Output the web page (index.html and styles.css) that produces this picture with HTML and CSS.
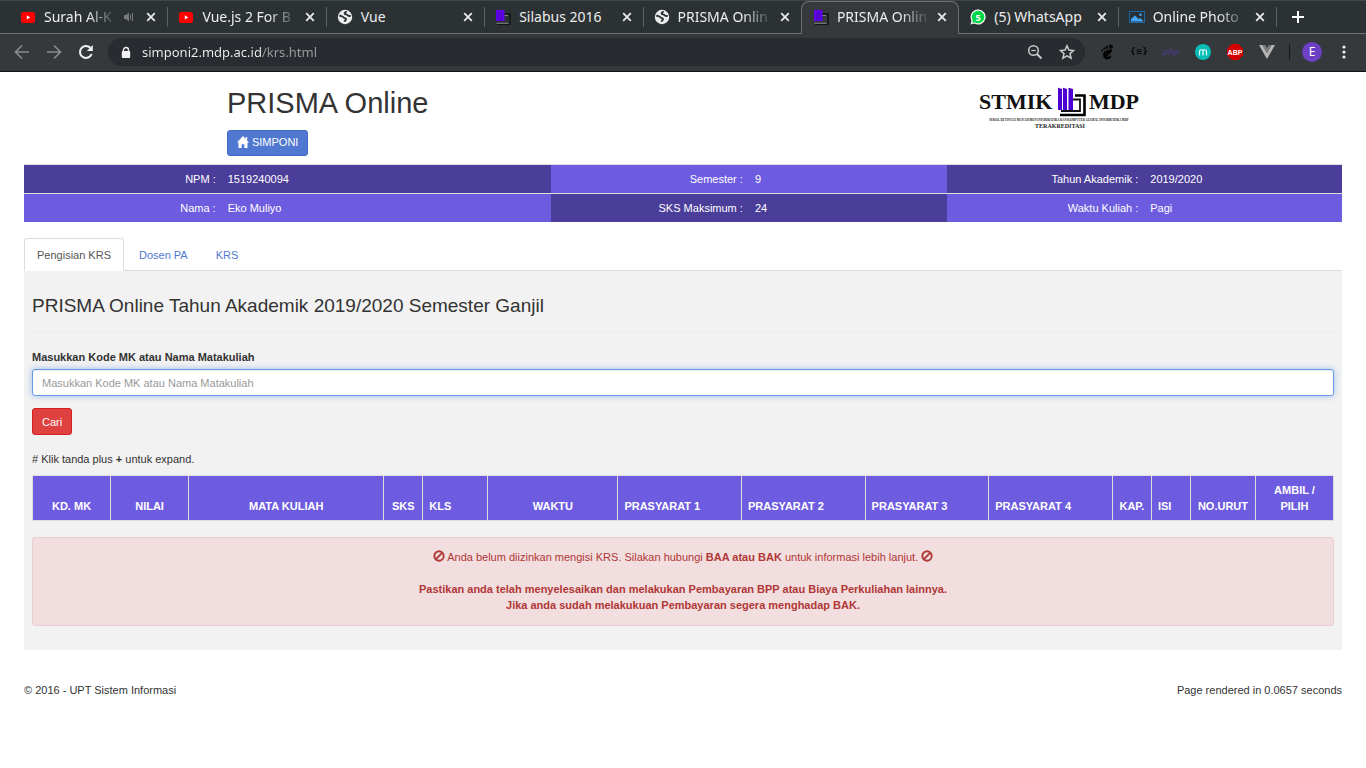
FILE: index.html
```html
<!DOCTYPE html>
<html lang="id">
<head>
<meta charset="utf-8">
<title>PRISMA Online</title>
<link rel="stylesheet" href="styles.css">
</head>
<body>
<svg class="defs" aria-hidden="true">
  <symbol id="i-close" viewBox="0 0 16 16"><path d="M4.2 4.2l7.6 7.6M11.8 4.2l-7.6 7.6" stroke="#e8eaeb" stroke-width="1.8" fill="none"/></symbol>
  <symbol id="i-youtube" viewBox="0 0 16 16"><rect x="1" y="3" width="14" height="11" rx="2.6" fill="#f00"/><path d="M6.8 6.2v4.4l3.4-2.2z" fill="#fff"/></symbol>
  <symbol id="i-globe" viewBox="0 0 16 16"><circle cx="8" cy="8" r="7.2" fill="#ececec"/><path d="M2.4 6.4c1.6 1 3.2.6 4 1.9.8 1.200 2.300.4 2.600 1.600.2 1-1.200 1.700-1.500 2.900M9.300 2.200c-.2 1.300-1.800 1-1.700 2.200.1 1.300 2.300.6 3 1.900.6 1 2 .4 3.200.9" fill="none" stroke="#2c3234" stroke-width="1.900"/></symbol>
  <symbol id="i-mdp" viewBox="0 0 16 16"><path d="M9 5h6v10.500H2" fill="none" stroke="#141414" stroke-width="1.500"/><path d="M9 6.500h4M1.500 14.300h12" fill="none" stroke="#858585" stroke-width="1"/><path d="M1 1.500L2.500.5l1.500 1 1-1 1.500 1 1.500-1 1.500 1V12H1z" fill="#6000ee"/><path d="M3.800 3v9M6.600 3v9" stroke="#3a1690" stroke-width=".7"/></symbol>
  <symbol id="i-ban" viewBox="0 0 12 12"><circle cx="6" cy="6" r="4.700" fill="none" stroke="currentColor" stroke-width="1.900"/><path d="M2.800 9.200l6.400-6.400" stroke="currentColor" stroke-width="1.900"/></symbol>
</svg>

<header class="browser">
  <div class="tabstrip">
    <div class="tab"><svg class="favicon"><use href="#i-youtube"/></svg><span class="tab-title fade">Surah Al-K</span><svg class="speaker" viewBox="0 0 12 12"><path d="M1 4h2l3-2.500v9L3 8H1z" fill="#777b7d"/><path d="M7.500 3.500v5M9.500 2v8" stroke="#777b7d" fill="none"/></svg><button class="close" aria-label="Tutup tab"><svg><use href="#i-close"/></svg></button></div>
    <div class="tab"><svg class="favicon"><use href="#i-youtube"/></svg><span class="tab-title fade">Vue.js 2 For B</span><button class="close" aria-label="Tutup tab"><svg><use href="#i-close"/></svg></button></div>
    <div class="tab"><svg class="favicon"><use href="#i-globe"/></svg><span class="tab-title">Vue</span><button class="close" aria-label="Tutup tab"><svg><use href="#i-close"/></svg></button></div>
    <div class="tab"><svg class="favicon"><use href="#i-mdp"/></svg><span class="tab-title">Silabus 2016</span><button class="close" aria-label="Tutup tab"><svg><use href="#i-close"/></svg></button></div>
    <div class="tab before-active"><svg class="favicon"><use href="#i-globe"/></svg><span class="tab-title fade">PRISMA Onlin</span><button class="close" aria-label="Tutup tab"><svg><use href="#i-close"/></svg></button></div>
    <div class="tab active"><svg class="favicon"><use href="#i-mdp"/></svg><span class="tab-title fade">PRISMA Onlin</span><button class="close" aria-label="Tutup tab"><svg><use href="#i-close"/></svg></button></div>
    <div class="tab"><svg class="favicon" viewBox="0 0 16 16"><path d="M8 .5a7.500 7.500 0 1 1-3.600 14L.5 15.500l1-3.900A7.500 7.500 0 0 1 8 .5z" fill="#fff"/><path d="M8 1.700a6.300 6.300 0 1 1-3.300 11.600l-2.500.6.700-2.400A6.300 6.300 0 0 1 8 1.700z" fill="#00d746"/><text x="8" y="11.500" text-anchor="middle" class="badge-text">5</text></svg><span class="tab-title">(5) WhatsApp</span><button class="close" aria-label="Tutup tab"><svg><use href="#i-close"/></svg></button></div>
    <div class="tab"><svg class="favicon" viewBox="0 0 16 16"><rect x=".5" y="2.500" width="15" height="11" fill="#263238" stroke="#1769aa"/><path d="M2 12.500V10L6 6.500l3.500 3.500L11 9l3 2.500v1z" fill="#42a5f5"/><circle cx="11.500" cy="5.800" r="1.300" fill="#42a5f5"/></svg><span class="tab-title fade">Online Photo</span><button class="close" aria-label="Tutup tab"><svg><use href="#i-close"/></svg></button></div>
    <button class="new-tab" aria-label="Tab baru"><svg viewBox="0 0 14 14"><path d="M7 1v12M1 7h12" stroke="#fff" stroke-width="2"/></svg></button>
  </div>
  <div class="toolbar">
    <button class="nav-btn" aria-label="Kembali"><svg viewBox="0 0 16 16"><path d="M15 8H2M8 1.500L1.500 8 8 14.500" fill="none" stroke="#888b8d" stroke-width="1.700"/></svg></button>
    <button class="nav-btn" aria-label="Maju"><svg viewBox="0 0 16 16"><path d="M1 8h13M8 1.500L14.500 8 8 14.500" fill="none" stroke="#888b8d" stroke-width="1.700"/></svg></button>
    <button class="nav-btn" aria-label="Muat ulang"><svg viewBox="0 0 16 16"><path d="M13.600 10A6 6 0 1 1 12.300 3.800" fill="none" stroke="#f1f1f1" stroke-width="2.100"/><path d="M14.800 1v6H8.800z" fill="#f1f1f1"/></svg></button>
    <div class="omnibox">
      <svg class="lock" viewBox="0 0 10 12"><path d="M2.500 5V3.500a2.500 2.500 0 0 1 5 0V5" fill="none" stroke="#f1f1f1" stroke-width="1.400"/><rect x=".8" y="4.600" width="8.400" height="7" rx="1" fill="#f1f1f1"/></svg>
      <input class="url" type="text" aria-label="Alamat" value="simponi2.mdp.ac.id/krs.html">
      <button class="omni-btn" aria-label="Zoom"><svg viewBox="0 0 16 16"><circle cx="6.500" cy="6.500" r="4.800" fill="none" stroke="#c8cacb" stroke-width="1.500"/><path d="M10 10l4.500 4.500" stroke="#c8cacb" stroke-width="2"/><path d="M4.300 6.500h4.400" stroke="#c8cacb" stroke-width="1.200"/></svg></button>
      <button class="omni-btn" aria-label="Tandai"><svg viewBox="0 0 16 16"><path d="M8 1.800l1.900 4.300 4.600.4-3.500 3.100 1.100 4.600L8 11.800l-4.100 2.400L5 9.600 1.500 6.500l4.600-.4z" fill="none" stroke="#c8cacb" stroke-width="1.500"/></svg></button>
    </div>
    <div class="extensions">
      <button class="ext" aria-label="GNOME"><svg viewBox="0 0 16 16"><g fill="#050505"><ellipse cx="11.800" cy="2.600" rx="2.100" ry="2.200"/><ellipse cx="7.900" cy="3.300" rx="1.100" ry="1.600"/><ellipse cx="5.300" cy="4.600" rx="1" ry="1.400"/><ellipse cx="3.200" cy="6.500" rx=".9" ry="1.100"/><path d="M13 5.500C8 5 4 7.500 4 10.500 4 13.500 6 15.500 8.500 15.500c2.800 0 4-2.500 3.700-3.700-.4-1-1.600-.5-2 .4-.6 1.400-1.700.9-1.600 0C8.900 10.500 13.600 9 13 5.500z"/></g></svg></button>
      <button class="ext json">{≡}</button>
      <button class="ext php">php</button>
      <button class="ext" aria-label="m"><svg viewBox="0 0 16 16"><circle cx="8" cy="8" r="8" fill="#07bdb5"/><path d="M4.500 11.500V7.500a1.700 1.700 0 0 1 3.500 0v4M8 7.500a1.700 1.700 0 0 1 3.500 0v4" fill="none" stroke="#e6fffd" stroke-width="1.200"/></svg></button>
      <button class="ext" aria-label="AdBlock Plus"><svg viewBox="0 0 16 16"><path d="M4.700 0h6.600L16 4.700v6.600L11.300 16H4.700L0 11.300V4.700z" fill="#d30000"/><text x="8" y="10.500" text-anchor="middle" class="abp-text">ABP</text></svg></button>
      <button class="ext" aria-label="Vue"><svg viewBox="0 0 16 16"><path d="M0 1h3.500L8 9l4.500-8H16L8 15z" fill="#b5b5b5"/><path d="M3.500 1h2.800L8 4l1.700-3h2.800L8 9z" fill="#7b7b7b"/></svg></button>
    </div>
    <span class="divider"></span>
    <button class="avatar">E</button>
    <button class="menu" aria-label="Menu"><svg viewBox="0 0 4 16"><g fill="#f1f1f1"><circle cx="2" cy="3" r="1.600"/><circle cx="2" cy="8" r="1.600"/><circle cx="2" cy="13" r="1.600"/></g></svg></button>
  </div>
</header>

<main class="page">
  <div class="masthead">
    <div class="brand">
      <h1>PRISMA Online</h1>
      <a class="btn btn-primary" href="#"><svg class="home" viewBox="0 0 12 12"><path d="M6 0l6 6.400h-1.500V12H7.300V8.200H4.700V12H1.500V6.400H0z" fill="#fff"/><path d="M8.600 1h1.600v3H8.600z" fill="#fff"/></svg> SIMPONI</a>
    </div>
    <svg class="logo" viewBox="0 0 160 42" role="img" aria-label="STMIK MDP">
      <text x="0" y="22" class="logo-name">STMIK</text>
      <text x="160" y="22" text-anchor="end" class="logo-name">MDP</text>
      <path d="M96 8.500h9.500V28H81" fill="none" stroke="#000" stroke-width="2.600"/>
      <path d="M94 12.500h7V24H82" fill="none" stroke="#111" stroke-width="1.800"/>
      <path d="M79 .8l4 1.200V23h-4zM84 .8l4 1.200V23h-4zM89.500.8l4.500 1.200V23h-4.500z" fill="#4d00d2"/>
      <text x="80" y="34" text-anchor="middle" class="logo-sub">SEKOLAH TINGGI MANAJEMEN INFORMATIKA DAN KOMPUTER GLOBAL INFORMATIKA MDP</text>
      <text x="81" y="41" text-anchor="middle" class="logo-acc">TERAKREDITASI</text>
    </svg>
  </div>

  <table class="info">
    <tbody>
      <tr><th scope="row" class="dark">NPM :</th><td class="dark wide">1519240094</td><th scope="row" class="light">Semester :</th><td class="light">9</td><th scope="row" class="dark">Tahun Akademik :</th><td class="dark">2019/2020</td></tr>
      <tr><th scope="row" class="light">Nama :</th><td class="light">Eko Muliyo</td><th scope="row" class="dark">SKS Maksimum :</th><td class="dark">24</td><th scope="row" class="light">Waktu Kuliah :</th><td class="light">Pagi</td></tr>
    </tbody>
  </table>

  <nav class="nav-tabs">
    <a class="nav-link current" href="#">Pengisian KRS</a>
    <a class="nav-link" href="#">Dosen PA</a>
    <a class="nav-link" href="#">KRS</a>
  </nav>

  <section class="panel">
    <h3>PRISMA Online Tahun Akademik 2019/2020 Semester Ganjil</h3>
    <form class="search">
      <label for="mk">Masukkan Kode MK atau Nama Matakuliah</label>
      <input id="mk" class="form-control" type="text" placeholder="Masukkan Kode MK atau Nama Matakuliah">
      <button class="btn btn-danger" type="button">Cari</button>
    </form>
    <p class="hint"># Klik tanda plus <b>+</b> untuk expand.</p>
    <table class="courses">
      <thead>
        <tr>
          <th class="w6">KD. MK</th><th class="w6">NILAI</th><th class="w15">MATA KULIAH</th><th class="w3">SKS</th><th class="w5 start">KLS</th><th class="w10">WAKTU</th><th class="start">PRASYARAT 1</th><th class="start">PRASYARAT 2</th><th class="start">PRASYARAT 3</th><th class="start">PRASYARAT 4</th><th class="w3">KAP.</th><th class="w3 start">ISI</th><th class="w5">NO.URUT</th><th class="w6">AMBIL / PILIH</th>
        </tr>
      </thead>
    </table>
    <div class="alert" role="alert">
      <p><svg class="ban"><use href="#i-ban"/></svg> Anda belum diizinkan mengisi KRS. Silakan hubungi <b>BAA atau BAK</b> untuk informasi lebih lanjut. <svg class="ban"><use href="#i-ban"/></svg></p>
      <p><b>Pastikan anda telah menyelesaikan dan melakukan Pembayaran BPP atau Biaya Perkuliahan lainnya.<br>Jika anda sudah melakukuan Pembayaran segera menghadap BAK.</b></p>
    </div>
  </section>

  <footer class="footer">
    <span>© 2016 - UPT Sistem Informasi</span>
    <span>Page rendered in 0.0657 seconds</span>
  </footer>
</main>
</body>
</html>
```
FILE: styles.css
```css
* { box-sizing: border-box; }

body {
  margin: 0;
  background: #fff;
  color: #333;
  font: 11px/16px "Liberation Sans", Arial, sans-serif;
}

button { margin: 0; padding: 0; border: 0; background: none; font: inherit; cursor: pointer; }
svg { display: block; }
.defs { position: absolute; width: 0; height: 0; }

/* Browser chrome */
.browser {
  background: #2c3234;
  border-top: 1px solid #414547;
  border-bottom: 1px solid #111315;
  color: #eceeee;
  font-family: "Noto Sans", "Open Sans", sans-serif;
}
.tabstrip { display: flex; height: 33px; padding-left: 9px; box-shadow: inset 0 -1px #6b7072; }
.tab {
  flex: 1 1 100px;
  min-width: 0;
  position: relative;
  display: flex;
  align-items: center;
  padding: 0 8px 1px 11px;
}
.tab::after { content: ""; position: absolute; right: -1px; top: 6px; width: 1px; height: 20px; background: #5c6062; }
.tab.active::after, .tab.before-active::after { display: none; }
.tab.active { padding-bottom: 2px; background: #35393b; border: 1px solid #6b7072; border-top-width: 0; border-bottom: 0; border-radius: 8px 8px 0 0; box-shadow: inset 0 1px #6b7072; }
.favicon { flex: none; width: 16px; height: 16px; margin-right: 8px; }
.tab-title {
  flex: 1;
  min-width: 0;
  white-space: nowrap;
  font-size: 14px;
  line-height: 20px;
}
.fade {
  -webkit-mask-image: linear-gradient(90deg, #000 calc(100% - 30px), transparent);
  mask-image: linear-gradient(90deg, #000 calc(100% - 30px), transparent);
}
.speaker { flex: none; width: 12px; height: 12px; margin: 0 4px 0 6px; }
.close { flex: none; width: 16px; height: 16px; margin-left: 4px; }
.close svg { width: 16px; height: 16px; }
.new-tab { flex: none; width: 90px; padding: 0 0 1px 15px; }
.new-tab svg { width: 14px; height: 14px; }
.badge-text { font: bold 9px "Noto Sans", sans-serif; fill: #fff; }

.toolbar { display: flex; align-items: center; height: 37px; padding: 0 14px 1px; background: #35393b; }
.nav-btn { flex: none; width: 16px; height: 16px; margin-right: 16px; }
.nav-btn svg, .omni-btn svg { width: 16px; height: 16px; }
.omnibox {
  flex: 1;
  display: flex;
  align-items: center;
  height: 28px;
  padding: 0 10px 0 13px;
  border-radius: 14px;
  background: #282b2f;
  margin-left: -2px;
}
.lock { flex: none; width: 10px; height: 13px; }
.url {
  flex: 1;
  min-width: 0;
  height: 24px;
  margin-left: 11px;
  padding: 0;
  border: 0;
  outline: 0;
  font: 13px/20px "Noto Sans", "Open Sans", sans-serif;
  color: transparent;
  background: linear-gradient(90deg, #f1f1f1 119px, #9a9da0 119px);
  -webkit-background-clip: text;
  background-clip: text;
}
.omni-btn { flex: none; width: 16px; height: 16px; margin-left: 16px; }
.extensions { display: flex; gap: 16px; align-items: center; margin-left: 14px; }
.ext { width: 16px; height: 16px; line-height: 16px; display: flex; justify-content: center; white-space: nowrap; }
.ext svg { width: 16px; height: 16px; }
.json { color: #08090a; font: bold 8px/16px "DejaVu Sans", sans-serif; }
.php { color: #4f3b8f; font: italic 9px/16px "DejaVu Sans", sans-serif; }
.abp-text { font: bold 7px "Liberation Sans", sans-serif; fill: #fff; }
.divider { width: 1px; height: 16px; margin: 0 12px 0 14px; background: #151719; }
.avatar { width: 20px; height: 20px; border-radius: 50%; background: #6c3fc4; color: #fff; font: 12px/20px "Noto Sans", sans-serif; }
.menu { width: 16px; height: 16px; margin-left: 14px; display: flex; justify-content: center; }
.menu svg { width: 4px; height: 16px; }

/* Page */
.page { padding: 0 24px; }
.masthead {
  display: flex;
  justify-content: space-between;
  align-items: flex-start;
  width: 69.2%;
  min-width: 400px;
  margin: 0 auto;
  padding: 15px 0 8px;
}
h1 { margin: 0 0 11px; font-size: 29px; line-height: 32px; font-weight: 500; }
.logo { width: 160px; height: 42px; }
.logo-name { font: bold 22px "Liberation Serif", serif; fill: #111; }
.logo-sub { font: bold 3px "Liberation Serif", serif; fill: #222; }
.logo-acc { font: bold 6px "Liberation Serif", serif; fill: #222; }

.btn {
  display: inline-flex;
  align-items: center;
  gap: 3px;
  border: 1px solid;
  border-radius: 3px;
  color: #fff;
  text-decoration: none;
}
.btn-primary { padding: 3px 9px 5px; background: #5078d0; border-color: #4169c4; }
.btn-danger { padding: 5px 9px 4px; background: #df4141; border-color: #d62020; }
.home { width: 12px; height: 12px; }

.info { width: 100%; border-collapse: collapse; table-layout: fixed; color: #fff; }
.info th, .info td { width: 15%; padding: 6px; border-top: 1px solid #ddd; text-align: left; font-weight: 400; }
.info th { text-align: right; }
.info .wide { width: 25%; }
.dark { background: #4b3d9a; }
.light { background: #6e5ce0; }

.nav-tabs { display: flex; gap: 2px; margin-top: 16px; border-bottom: 1px solid #ddd; }
.nav-link {
  margin-bottom: -1px;
  padding: 8px 12px;
  border: 1px solid transparent;
  border-bottom: 0;
  border-radius: 3px 3px 0 0;
  color: #5078d0;
  text-decoration: none;
}
.nav-link.current { background: #fff; border-color: #ddd; color: #555; }

.panel { padding: 24px 8px; background: #f2f2f2; }
h3 { margin: 0 0 16px; padding-bottom: 15px; border-bottom: 1px solid #ebebeb; font-size: 19px; line-height: 22px; font-weight: 500; }
.search label { display: block; margin-bottom: 4px; font-weight: 700; }
.form-control {
  display: block;
  width: 100%;
  height: 27px;
  margin-bottom: 12px;
  padding: 4px 9px;
  border: 1px solid #6699ea;
  border-radius: 3px;
  background: #fff;
  box-shadow: inset 0 1px 1px rgba(0, 0, 0, .08), 0 0 6px rgba(102, 153, 234, .6);
  font: inherit;
  color: #555;
  outline: 0;
}
.form-control::placeholder { color: #999; opacity: 1; }
.hint { margin: 16px 0 8px; }

.courses { width: 100%; border-collapse: collapse; table-layout: fixed; color: #fff; background: #6e5ce0; }
.courses th { padding: 6px; border: 1px solid #ddd; text-align: center; vertical-align: bottom; font-weight: 700; }
.courses .start { text-align: left; }
.w3 { width: 3%; }
.w5 { width: 5%; }
.w6 { width: 6%; }
.w10 { width: 10%; }
.w15 { width: 15%; }

.alert {
  margin-top: 16px;
  padding: 11px 12px 12px;
  border: 1px solid #ebccd1;
  border-radius: 3px;
  background: #f2dede;
  color: #b03737;
  text-align: center;
}
.alert p { margin: 0; }
.alert p + p { margin-top: 16px; }
.ban { display: inline-block; width: 12px; height: 12px; vertical-align: -1px; }

.footer { display: flex; justify-content: space-between; padding: 32px 0; }
```
